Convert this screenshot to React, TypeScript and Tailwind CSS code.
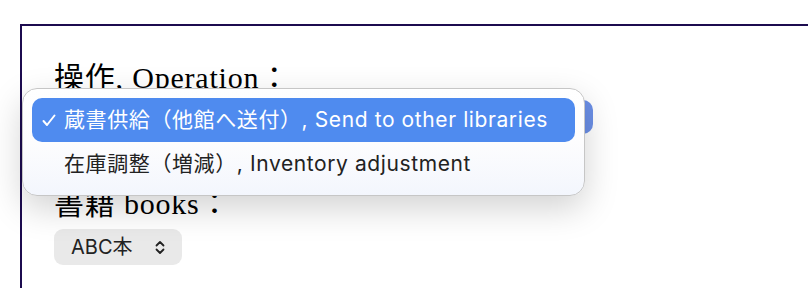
const serif = "font-['Liberation_Serif','Noto_Sans_CJK_JP',serif]";
const sans = "font-['Inter','Noto_Sans_CJK_JP',sans-serif]";

function Check() {
  return (
    <svg width="14" height="13" viewBox="0 0 14 13" className="shrink-0">
      <path d="M1.5 7 L5 11 L12.5 1.5" fill="none" stroke="white" strokeWidth="2" strokeLinecap="round" strokeLinejoin="round" />
    </svg>
  );
}

function UpDown() {
  return (
    <svg width="10" height="15" viewBox="0 0 10 15" className="shrink-0">
      <path d="M1.5 5.5 L5 2 L8.5 5.5 M1.5 9.5 L5 13 L8.5 9.5" fill="none" stroke="#222" strokeWidth="1.8" strokeLinecap="round" strokeLinejoin="round" />
    </svg>
  );
}

export default function App() {
  return (
    <div className="relative h-[288px] w-[808px] overflow-hidden bg-white">
      <div className="ml-[20px] mt-[24px] h-[400px] w-[900px] border-2 border-[#1c0b4f] pl-[32px] pt-[36px]">
        <div className={`${serif} text-[30px] leading-[32px] tracking-[0.8px] text-black`}>操作, Operation：</div>
        <div className="mt-[6px] h-[34px] w-[539px] rounded-[10px] bg-[#6b8fe6]" />
        <div className={`${serif} mt-[54px] text-[30px] leading-[32px] tracking-[0.8px] text-black`}>書籍 books：</div>
        <div className={`${sans} mt-[9px] flex h-[36px] w-[128px] items-center gap-[22px] rounded-[9px] bg-[#e9e9e9] pl-[17px] text-[20px] text-[#222]`}>
          <span>ABC本</span>
          <UpDown />
        </div>
      </div>

      {/* open select menu */}
      <div className="absolute left-[22px] top-[88px] w-[563px] rounded-[15px] border border-[#c6c6c6] bg-gradient-to-b from-white via-[#fdfdfe] to-[#f3f6fd] p-[9px] shadow-[0_12px_34px_rgba(0,0,0,0.18)]">
        <div className={`${sans} flex h-[44px] items-center rounded-[10px] bg-[#4f8bef] pl-[10px] text-[21px] tracking-[0.6px] text-white`}>
          <span className="w-[22px]"><Check /></span>
          <span>蔵書供給（他館へ送付）, Send to other libraries</span>
        </div>
        <div className={`${sans} flex h-[44px] items-center pl-[32px] text-[21px] tracking-[0.6px] text-[#222]`}>
          在庫調整（増減）, Inventory adjustment
        </div>
      </div>
    </div>
  );
}
